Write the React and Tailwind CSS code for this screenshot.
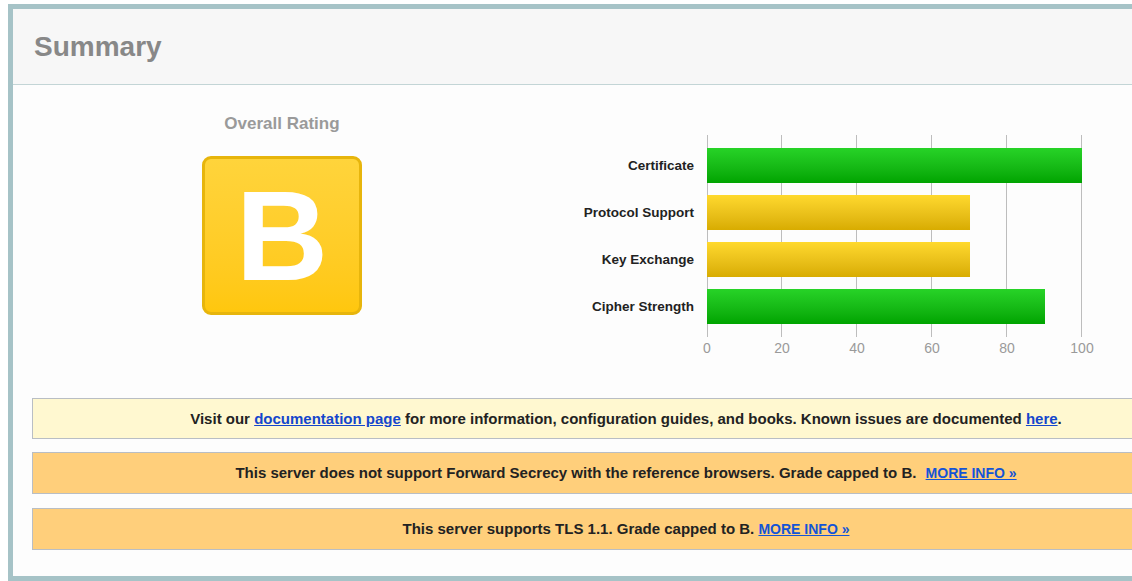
const bars = [
  { label: 'Certificate', value: 100, color: 'green' },
  { label: 'Protocol Support', value: 70, color: 'yellow' },
  { label: 'Key Exchange', value: 70, color: 'yellow' },
  { label: 'Cipher Strength', value: 90, color: 'green' },
];

const ticks = [0, 20, 40, 60, 80, 100];

const Chart = () => (
  <div className="flex pt-[50px]">
    {/* labels */}
    <div className="w-[162px] pt-[8px] flex flex-col">
      {bars.map((b) => (
        <div key={b.label} className="h-[47px] flex items-center justify-end text-[13.5px] font-bold text-[#222]">
          {b.label}
        </div>
      ))}
    </div>

    {/* plot */}
    <div className="ml-[13px] w-[375px]">
      <div className="relative h-[202px] pt-[7px]">
        {ticks.map((t) => (
          <div
            key={t}
            className="absolute top-0 bottom-0 w-px bg-[#bdbdbd]"
            style={{ left: `${(t / 100) * 375 - (t === 0 ? 0 : 1)}px` }}
          />
        ))}
        {bars.map((b) => (
          <div key={b.label} className="relative h-[47px] flex items-center">
            <div
              className={
                b.color === 'green'
                  ? 'h-[35px] bg-linear-to-b from-[#27d327] to-[#00a400]'
                  : 'h-[35px] bg-linear-to-b from-[#ffd92d] to-[#d8ac00]'
              }
              style={{ width: `${(b.value / 100) * 375}px` }}
            />
          </div>
        ))}
      </div>
      <div className="relative h-[20px] mt-[1px] text-[14px] text-[#9a9a9a]">
        {ticks.map((t) => (
          <span
            key={t}
            className="absolute top-0 leading-[20px] -translate-x-1/2"
            style={{ left: `${(t / 100) * 375}px` }}
          >
            {t}
          </span>
        ))}
      </div>
    </div>
  </div>
);

const Notice = ({ tone, children, h }) => (
  <div
    className={`${h} w-[1188px] flex items-center justify-center border border-[#b9bec4] text-[15px] font-bold text-[#222] ${
      tone === 'info' ? 'bg-[#fff8d0]' : 'bg-[#ffcf7b]'
    }`}
  >
    <p className="pt-px">{children}</p>
  </div>
);

const MoreInfo = ({ gap }) => (
  <a href="#" className={`${gap} text-[14px] text-[#1454d6] underline uppercase`}>
    More info »
  </a>
);

export default function App() {
  return (
    <div className="w-[1132px] h-[581px] overflow-hidden bg-white font-['Liberation_Sans',Arial,sans-serif]">
      <div className="pt-[4px] pl-[8px]">
        <div className="w-[1250px] border-[5px] border-[#a6c3c7]">
          {/* Header */}
          <div className="h-[76px] bg-[#f7f7f7] border-b border-[#c3d5d6] px-[21px] flex items-center">
            <h2 className="text-[28px] font-bold text-[#888]">Summary</h2>
          </div>

          {/* Body */}
          <div className="bg-[#fdfdfd] pl-[19px] pb-[26px]">
            <div className="h-[313px] flex">
              <div className="w-[500px] pt-[29px] flex flex-col items-center">
                <div className="text-[17px] leading-[20px] font-bold text-[#9a9a9a]">Overall Rating</div>
                <div className="mt-[22px] w-[160px] h-[159px] rounded-[9px] border-[3px] border-[#e7b50c] bg-linear-to-b from-[#ffd43b] to-[#ffc70d] flex items-center justify-center">
                  <span className="text-[128px] leading-none font-bold text-white">B</span>
                </div>
              </div>
              <Chart />
            </div>

            <div className="flex flex-col">
              <Notice tone="info" h="h-[41px]">
                Visit our{' '}
                <a href="#" className="text-[#1446cc] underline">documentation page</a>{' '}
                for more information, configuration guides, and books. Known issues are documented{' '}
                <a href="#" className="text-[#1446cc] underline">here</a>.
              </Notice>
              <div className="h-[13px]" />
              <Notice tone="warn" h="h-[42px]">
                This server does not support Forward Secrecy with the reference browsers. Grade capped to B.{' '}
                <MoreInfo gap="ml-[5px]" />
              </Notice>
              <div className="h-[14px]" />
              <Notice tone="warn" h="h-[42px]">
                This server supports TLS 1.1. Grade capped to B.{' '}
                <MoreInfo gap="ml-0" />
              </Notice>
            </div>
          </div>
        </div>
      </div>
    </div>
  );
}
